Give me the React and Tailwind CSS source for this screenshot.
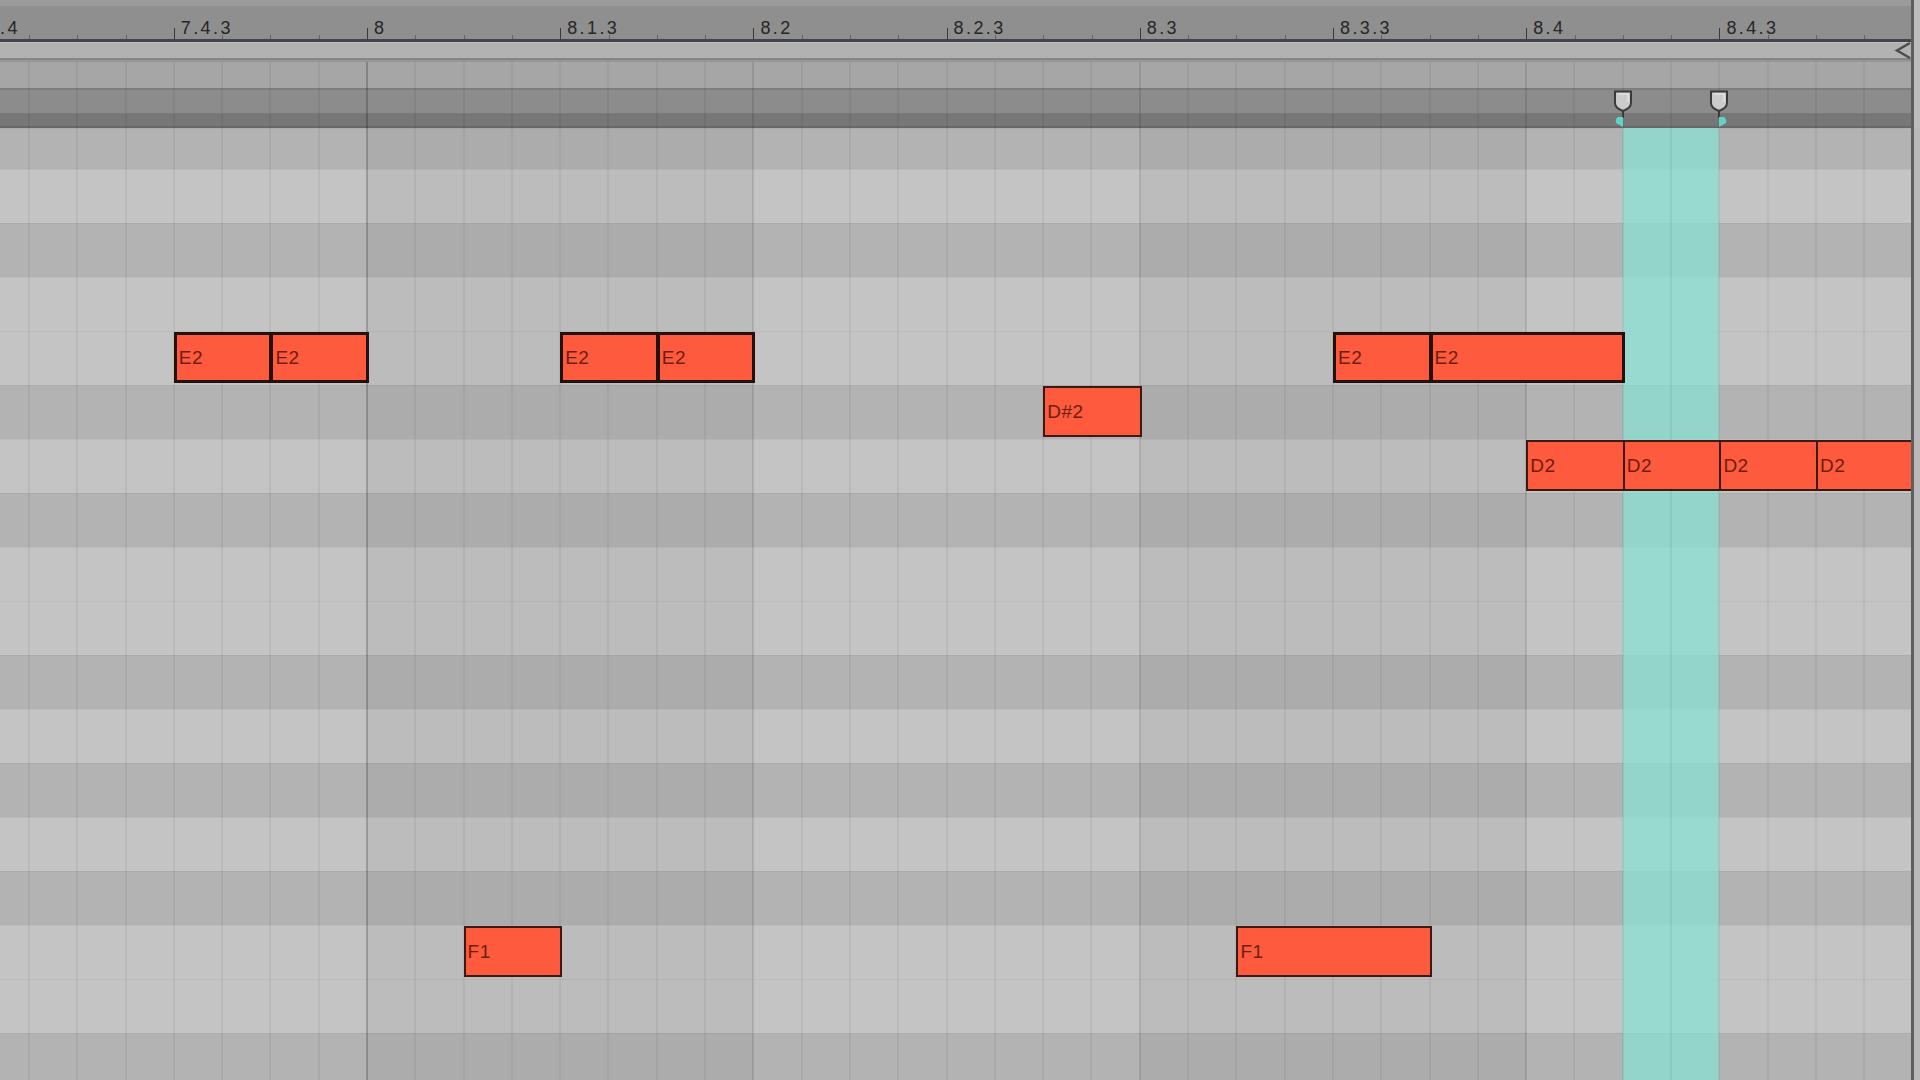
import React from 'react';

// piano roll geometry (px)
const BAR_X = 367;
const SIXTEENTH = 96.6;
const ROW_H = 54;

const rows = [
  { name: 'G#2', black: true, h: 41 },
  { name: 'G2' },
  { name: 'F#2', black: true },
  { name: 'F2' },
  { name: 'E2' },
  { name: 'D#2', black: true },
  { name: 'D2' },
  { name: 'C#2', black: true },
  { name: 'C2' },
  { name: 'B1' },
  { name: 'A#1', black: true },
  { name: 'A1' },
  { name: 'G#1', black: true },
  { name: 'G1' },
  { name: 'F#1', black: true },
  { name: 'F1' },
  { name: 'E1' },
  { name: 'D#1', black: true },
];

const notes = [
  { pitch: 'E2', start: -2, len: 1, thick: true },
  { pitch: 'E2', start: -1, len: 1, thick: true },
  { pitch: 'E2', start: 2, len: 1, thick: true },
  { pitch: 'E2', start: 3, len: 1, thick: true },
  { pitch: 'E2', start: 10, len: 1, thick: true },
  { pitch: 'E2', start: 11, len: 2, thick: true },
  { pitch: 'D#2', start: 7, len: 1 },
  { pitch: 'D2', start: 12, len: 1 },
  { pitch: 'D2', start: 13, len: 1 },
  { pitch: 'D2', start: 14, len: 1 },
  { pitch: 'D2', start: 15, len: 1 },
  { pitch: 'F1', start: 1, len: 1 },
  { pitch: 'F1', start: 9, len: 2 },
];

const labels = ['7.4', '7.4.3', '8', '8.1.3', '8.2', '8.2.3', '8.3', '8.3.3', '8.4', '8.4.3'];

const beats = [false, true, false, true, false, true];

const rowTop = (pitch) => {
  const i = rows.findIndex((r) => r.name === pitch);
  return i === 0 ? 0 : 41 + (i - 1) * ROW_H;
};

const Ruler = () => (
  <div className="relative flex h-[39px] shrink-0 flex-col bg-[#8f8f8f]">
    <div className="h-[6px] shrink-0 bg-[#9b9b9b]" />
    {Array.from({ length: 41 }, (_, i) => (
      <div
        key={i}
        className="absolute bottom-0 h-[4px] w-px bg-black/30"
        style={{ left: BAR_X + (i - 8) * (SIXTEENTH / 2) }}
      />
    ))}
    {labels.map((label, i) => (
      <div key={label} className="absolute top-0 h-full" style={{ left: BAR_X + (i - 2) * SIXTEENTH * 2 }}>
        <div className="absolute left-0 top-[28px] h-[11px] w-px bg-[#3a3a3a]" />
        <span className="absolute left-[7px] top-[19px] whitespace-nowrap text-[18px] leading-none tracking-[2.4px] text-[#262626]">
          {label}
        </span>
      </div>
    ))}
  </div>
);

const LoopMarker = ({ x, side }) => (
  <svg className="absolute top-[28px]" style={{ left: x - 11 }} width="22" height="38" viewBox="0 0 22 38">
    <path d="M3 1.5 H19 V13 Q19 18 11 21 Q3 18 3 13 Z" fill="#cbcbcb" stroke="#3a3a3a" strokeWidth="2" />
    <path d="M6 4 H16 V12" fill="none" stroke="#e2e2e2" strokeWidth="1.5" />
    <line x1="11" y1="21" x2="11" y2="28" stroke="#3a3a3a" strokeWidth="2" />
    {side === 'left' ? (
      <path d="M11 27 L11 37 L4 33 Q3 29 6 27 Z" fill="#62d2c5" />
    ) : (
      <path d="M11 27 L11 37 L18 33 Q19 29 16 27 Z" fill="#62d2c5" />
    )}
  </svg>
);

const Note = ({ pitch, start, len, thick }) => (
  <div
    className={`absolute z-10 flex h-[51px] items-center bg-[#fd5a3e] pl-[2px] text-[19px] leading-none tracking-[0.5px] text-[#6e1e10] ${
      thick ? 'border-[3px] border-[#24110c]' : 'border-2 border-[#3a1a12]'
    }`}
    style={{ left: BAR_X + start * SIXTEENTH, top: rowTop(pitch) + 1, width: len * SIXTEENTH + 2 }}
  >
    {pitch}
  </div>
);

export default function App() {
  return (
    <div className="relative flex h-[1080px] w-[1920px] flex-col overflow-hidden bg-[#c4c4c4] font-['Liberation_Sans',Arial,sans-serif]">
      <Ruler />
      <div className="h-[3px] shrink-0 bg-[#41444a]" />
      <div className="relative h-[16px] shrink-0 border-t border-[#bfbfbf] bg-[#b2b2b2]">
        <svg className="absolute right-[8px] top-[-1px]" width="18" height="18" viewBox="0 0 18 18">
          <polyline points="16,1 3,8.5 16,16" fill="none" stroke="#4d4d4d" strokeWidth="2.5" />
        </svg>
      </div>
      <div className="h-[2px] shrink-0 bg-[#858585]" />
      <div className="h-[2px] shrink-0 bg-[#979797]" />

      <div className="relative isolate flex min-h-0 flex-1 flex-col overflow-hidden">
        <div className="h-[26px] shrink-0 bg-[#a6a6a6]" />
        <div className="h-[2px] shrink-0 bg-[#7e7e7e]" />
        <div className="h-[23px] shrink-0 bg-[#8c8c8c]" />
        <div className="h-[13px] shrink-0 bg-[#777777]" />
        <div className="h-[2px] shrink-0 bg-[#686868]" />

        <div className="relative flex min-h-0 flex-1 flex-col">
          {rows.map((row) => (
            <div
              key={row.name}
              className={`shrink-0 border-t border-black/[0.04] ${row.h ? 'h-[41px]' : 'h-[54px]'} ${
                row.black ? 'bg-[#b3b3b3]' : 'bg-[#c4c4c4]'
              }`}
            />
          ))}

          <div className="pointer-events-none absolute inset-y-0 left-[-19.4px] flex">
            {beats.map((dark, i) => (
              <div key={i} className={`h-full w-[386.4px] shrink-0 ${dark ? 'bg-black/[0.04]' : ''}`} />
            ))}
          </div>

          <div className="absolute inset-y-0 left-[1623px] w-[96px] bg-[#86e2d6]/70" />

          {notes.map((n, i) => (
            <Note key={i} {...n} />
          ))}
        </div>

        <div className="pointer-events-none absolute inset-y-0 left-[-20.4px] flex">
          {Array.from({ length: 41 }, (_, i) => {
            const idx = i - 8;
            const kind = idx % 32 === 0 ? 'bar' : idx % 8 === 0 ? 'beat' : 'minor';
            return (
              <div
                key={i}
                className={`h-full w-[48.3px] shrink-0 border-l-2 ${
                  kind === 'bar' ? 'border-black/20' : kind === 'beat' ? 'border-black/10' : 'border-black/[0.05]'
                }`}
              />
            );
          })}
        </div>

        <LoopMarker x={1623} side="left" />
        <LoopMarker x={1719} side="right" />
      </div>

      <div className="absolute right-0 top-0 flex h-full w-[9px] flex-col border-l-[3px] border-[#5e5e5e]">
        <div className="h-[128px] shrink-0 bg-[#bdbdbd]" />
        <div className="flex-1 bg-[#b8b8b8]" />
      </div>
    </div>
  );
}
